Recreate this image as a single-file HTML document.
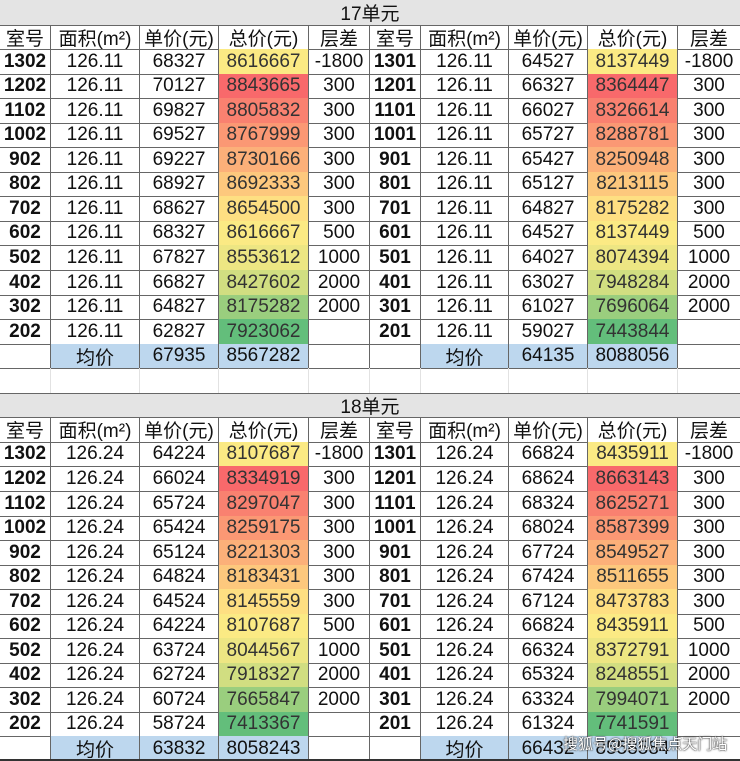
<!DOCTYPE html>
<html><head><meta charset="utf-8">
<style>
html,body{margin:0;padding:0;background:#fff;width:740px;height:761px;overflow:hidden;}
#t{position:relative;width:740px;height:761px;overflow:hidden;font-family:"Liberation Sans","Noto Sans CJK SC",sans-serif;font-size:19px;color:#111;}
.c{position:absolute;box-sizing:border-box;display:flex;align-items:center;justify-content:center;border-right:1px solid #666;border-bottom:1px solid #666;white-space:nowrap;}
.b{font-weight:bold;}
.wm{position:absolute;left:563px;top:735px;white-space:nowrap;color:#fff;font-size:15px;line-height:18px;font-family:"Noto Sans CJK SC",sans-serif;text-shadow:0 0 2px #333,0 0 1px #000;}
</style></head><body>
<div id="t"></div>
<div class="wm">搜狐号@搜狐焦点天门站</div>
<script>
var X=[0,51,140,219,309,370,421,509,588,678,740];
function Y(i){return Math.round(i*761/31);}
var T=document.getElementById('t');
function cell(c0,c1,r,txt,o){o=o||{};var d=document.createElement('div');d.className='c'+(o.b?' b':'');
d.style.left=X[c0]+'px';d.style.width=(X[c1]-X[c0])+'px';d.style.top=Y(r)+'px';d.style.height=(Y(r+1)-Y(r)+1)+'px';
if(o.bg)d.style.background=o.bg;if(o.col)d.style.color=o.col;if(o.bc)d.style.borderColor=o.bc;
if(c1==10)d.style.borderRight='none';
d.textContent=txt;T.appendChild(d);}
function mix(a,b,t){return 'rgb('+[0,1,2].map(function(i){return Math.round(a[i]+(b[i]-a[i])*t)}).join(',')+')';}
var G=[99,190,123],Yl=[255,235,132],R=[248,105,107];
function colors(v){var s=v.slice().sort(function(a,b){return a-b});var mn=s[0],mx=s[s.length-1],md=(s[5]+s[6])/2;
return v.map(function(x){return x<=md?mix(G,Yl,(x-mn)/(md-mn)):mix(Yl,R,(x-md)/(mx-md));});}
var floorsL=['1302','1202','1102','1002','902','802','702','602','502','402','302','202'];
var floorsR=floorsL.map(function(f){return f.slice(0,-1)+'1';});
var diff=['-1800','300','300','300','300','300','300','500','1000','2000','2000',''];
var data=[
{title:'17单元',area:'126.11',
 L:{u:[68327,70127,69827,69527,69227,68927,68627,68327,67827,66827,64827,62827],t:[8616667,8843665,8805832,8767999,8730166,8692333,8654500,8616667,8553612,8427602,8175282,7923062],au:'67935',at:'8567282'},
 R:{u:[64527,66327,66027,65727,65427,65127,64827,64527,64027,63027,61027,59027],t:[8137449,8364447,8326614,8288781,8250948,8213115,8175282,8137449,8074394,7948284,7696064,7443844],au:'64135',at:'8088056'}},
{title:'18单元',area:'126.24',
 L:{u:[64224,66024,65724,65424,65124,64824,64524,64224,63724,62724,60724,58724],t:[8107687,8334919,8297047,8259175,8221303,8183431,8145559,8107687,8044567,7918327,7665847,7413367],au:'63832',at:'8058243'},
 R:{u:[66824,68624,68324,68024,67724,67424,67124,66824,66324,65324,63324,61324],t:[8435911,8663143,8625271,8587399,8549527,8511655,8473783,8435911,8372791,8248551,7994071,7741591],au:'66432',at:'8558584'}}];
var hdr=['室号','面积(m²)','单价(元)','总价(元)','层差'];
var blue='#bdd7ee';
data.forEach(function(d,k){
 var r0=k*16;
 var tt=document.createElement('div');tt.className='c';tt.style.cssText='left:0;width:740px;top:'+Y(r0)+'px;height:'+(Y(r0+1)-Y(r0)+1)+'px;background:#e4e4e4;border-right:none;border-top:'+(k?'1px solid #666':'none');tt.textContent=d.title;T.appendChild(tt);
 [0,5].forEach(function(off,s){
  var side=s?d.R:d.L,fl=s?floorsR:floorsL,cl=colors(side.t);
  hdr.forEach(function(h,j){cell(off+j,off+j+1,r0+1,h);});
  for(var i=0;i<12;i++){var r=r0+2+i;
   cell(off,off+1,r,fl[i],{b:1});cell(off+1,off+2,r,d.area);cell(off+2,off+3,r,String(side.u[i]));
   cell(off+3,off+4,r,String(side.t[i]),{bg:cl[i],col:'#333'});cell(off+4,off+5,r,diff[i]);}
  var r=r0+14;
  cell(off,off+1,r,'');cell(off+1,off+2,r,'均价',{bg:blue});cell(off+2,off+3,r,side.au,{bg:blue});cell(off+3,off+4,r,side.at,{bg:blue});cell(off+4,off+5,r,'');
 });
 if(k==0){for(var j=0;j<10;j++)cell(j,j+1,15,'',{bc:'#e2e2e2'});}
});
var line=document.createElement('div');line.style.cssText='position:absolute;left:0;top:759px;width:740px;height:2px;background:#333';T.appendChild(line);
</script>
</body></html>
